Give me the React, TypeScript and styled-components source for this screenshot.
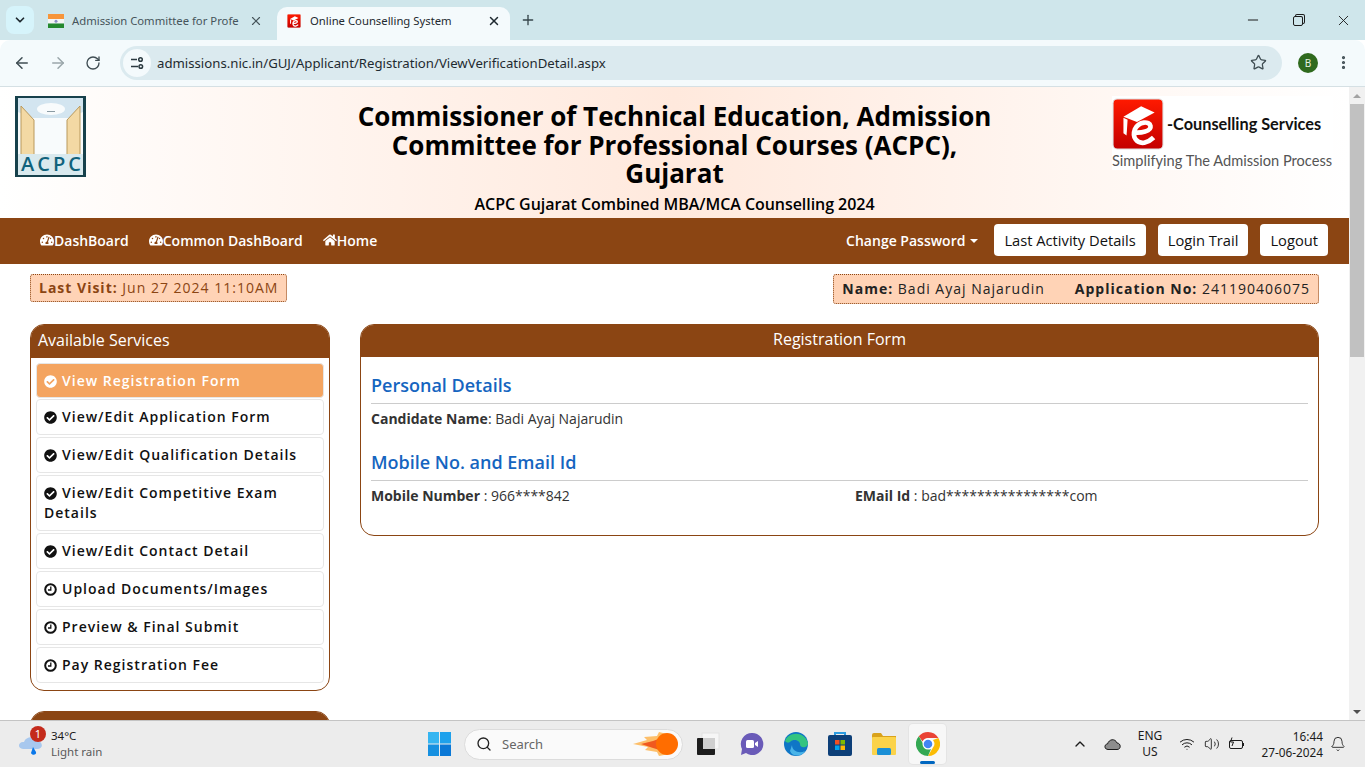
import styled, { createGlobalStyle } from "styled-components";
import { ArrowLeft, ArrowRight, ChevronDown, ChevronUp, Minus, MoreVertical, Plus, RotateCw, Search, Star, X, Bell, Volume2, Wifi } from "lucide-react";
import { FaCheckCircle, FaHome, FaTachometerAlt } from "react-icons/fa";

const GlobalStyle = createGlobalStyle`
  html, body { margin: 0; height: 100%; overflow: hidden; }
  body { font-family: "Open Sans", "Noto Sans", sans-serif; color: #333; background: #fff; }
  * { box-sizing: border-box; }
`;

const Screen = styled.div`
  width: 1365px;
  height: 767px;
  display: flex;
  flex-direction: column;
  overflow: hidden;
`;

// browser chrome
const TabStrip = styled.div`
  height: 40px;
  flex: none;
  background: #cfe6eb;
  display: flex;
  align-items: flex-end;
  padding-left: 6px;
  font-family: "Noto Sans", sans-serif;
  font-size: 11.3px;
`;

const TabSearch = styled.div`
  width: 28px;
  height: 28px;
  margin-bottom: 6px;
  border-radius: 8px;
  background: #d6f4fb;
  display: flex;
  align-items: center;
  justify-content: center;
  color: #1f2a30;
`;

const Tab = styled.div<{ $active?: boolean }>`
  width: ${(p) => (p.$active ? "233px" : "230px")};
  height: 33px;
  margin-left: ${(p) => (p.$active ? "7px" : "6px")};
  padding: ${(p) => (p.$active ? "0 9px 6px 10px" : "0 7px 6px 8px")};
  display: flex;
  align-items: center;
  gap: 8px;
  border-radius: 10px 10px 0 0;
  background: ${(p) => (p.$active ? "#f4fafc" : "transparent")};
  color: ${(p) => (p.$active ? "#1f2a30" : "#46545a")};

  svg { flex: none; }
`;

const TabTitle = styled.span<{ $active?: boolean }>`
  flex: 1;
  margin-left: ${(p) => (p.$active ? "1px" : "0")};
  white-space: nowrap;
`;

const NewTab = styled.div`
  margin: 0 0 6px 10px;
  height: 28px;
  display: flex;
  align-items: center;
  color: #36454b;
`;

const WindowControls = styled.div`
  margin-left: auto;
  height: 40px;
  display: flex;
  align-items: center;
  gap: 29px;
  padding-right: 13px;
  color: #1c1c1c;
`;

const RestoreIcon = styled.div`
  width: 10px;
  height: 10px;
  border: 1px solid #1c1c1c;
  border-radius: 2px;
  margin: 2px 3px 0 3px;
  box-shadow: 2px -2px 0 -1px #cfe6eb, 2px -2px 0 0 #1c1c1c;
`;

const Toolbar = styled.div`
  height: 47px;
  flex: none;
  background: #f4fafc;
  border-bottom: 1px solid #d5e0e4;
  border-radius: 10px 10px 0 0;
  display: flex;
  align-items: center;
  padding: 0 13px 1px 13px;
  color: #3f4d53;
`;

const NavIcons = styled.div`
  width: 107px;
  display: flex;
  align-items: center;
  gap: 18px;
`;

const AddressBar = styled.div`
  width: 1162px;
  height: 34px;
  border-radius: 17px;
  background: #dbeaef;
  display: flex;
  align-items: center;
  padding: 0 15px 0 3px;
`;

const SiteInfo = styled.div`
  width: 28px;
  height: 28px;
  border-radius: 50%;
  background: #f4fafc;
  display: flex;
  align-items: center;
  justify-content: center;
`;

const Url = styled.span`
  flex: 1;
  margin-left: 6px;
  font-family: "Noto Sans", sans-serif;
  font-size: 13.2px;
  color: #1f2a30;
`;

const Avatar = styled.div`
  width: 20px;
  height: 20px;
  margin: 0 17px 0 16px;
  border-radius: 50%;
  background: #2f6a1e;
  color: #e8f3e2;
  font-family: "Noto Sans", sans-serif;
  font-size: 10px;
  display: flex;
  align-items: center;
  justify-content: center;
`;

// page
const Viewport = styled.div`
  flex: 1;
  min-height: 0;
  display: flex;
`;

const Page = styled.div`
  flex: 1;
  min-width: 0;
  overflow: hidden;
`;

const Scrollbar = styled.div`
  width: 16px;
  flex: none;
  background: #f1f1f1;
  display: flex;
  flex-direction: column;
  align-items: center;
`;

const ScrollArrow = styled.div<{ $down?: boolean }>`
  height: 17px;
  flex: none;
  display: flex;
  align-items: center;
  justify-content: center;

  &::before {
    content: "";
    border-left: 4px solid transparent;
    border-right: 4px solid transparent;
    ${(p) => (p.$down ? "border-top: 4px solid #505050;" : "border-bottom: 4px solid #a3a3a3;")}
  }
`;

const ScrollThumb = styled.div`
  width: 14px;
  height: 253px;
  flex: none;
  background: #c1c1c1;
`;

const ScrollTrack = styled.div`
  flex: 1;
`;

const Header = styled.header`
  height: 131px;
  display: grid;
  grid-template-columns: 1fr 2fr 1fr;
  background: linear-gradient(to right, #fff 0%, #ffe9dd 50%, #fff 100%);
`;

const HeaderLeft = styled.div`
  padding: 9px 0 0 15px;
`;

const HeaderCenter = styled.div`
  padding: 15px 15px 0;
  text-align: center;
  color: #000;
`;

const SiteTitle = styled.h1`
  margin: 0;
  font-size: 26px;
  line-height: 28.6px;
  font-weight: 700;
`;

const SubTitle = styled.div`
  margin-top: 5px;
  font-size: 16px;
  line-height: 22px;
  font-weight: 600;
  letter-spacing: -0.05px;
`;

const HeaderRight = styled.div`
  padding: 9px 16px 0 0;
  display: flex;
  justify-content: flex-end;
`;

const BrandBox = styled.div`
  width: 221px;
  height: 74px;
  background: #fff;
`;

const BrandRow = styled.div`
  height: 55px;
  display: flex;
  align-items: center;
  gap: 3px;
`;

const BrandName = styled.span`
  font-family: "Lato", sans-serif;
  font-size: 16.3px;
  font-weight: 700;
  color: #111;
`;

const BrandTag = styled.div`
  font-family: "Lato", sans-serif;
  font-size: 14.6px;
  line-height: 19px;
  color: #555;
  white-space: nowrap;
`;

const NavBar = styled.nav`
  height: 46px;
  background: #8b4513;
  padding: 0 21px 2px 30px;
  display: flex;
  align-items: center;
`;

const NavLink = styled.a`
  padding: 0 10px;
  display: flex;
  align-items: center;
  font-size: 14px;
  font-weight: 600;
  color: #fff;
  white-space: nowrap;
`;

const DropLink = styled(NavLink)`
  padding-right: 4px;
`;

const Caret = styled.span`
  width: 0;
  height: 0;
  margin-left: 5px;
  margin-top: 2px;
  border-left: 4px solid transparent;
  border-right: 4px solid transparent;
  border-top: 4px solid #fff;
`;

const NavRight = styled.div`
  margin-left: auto;
  display: flex;
  align-items: center;
  gap: 12px;
`;

const NavButton = styled.button`
  height: 32px;
  padding: 0 10px;
  border: 0;
  border-radius: 4px;
  background: #fff;
  color: #111;
  font: 500 14.7px "Open Sans", sans-serif;
`;

const InfoStrip = styled.div`
  padding: 10px 30px 0;
  height: 60px;
  display: flex;
  justify-content: space-between;
  align-items: flex-start;
`;

const InfoBox = styled.div<{ $brown?: boolean }>`
  padding: 0 8px 2px;
  height: ${(p) => (p.$brown ? "28px" : "30px")};
  display: flex;
  align-items: center;
  gap: 30px;
  background: #ffd3b6;
  border: 1px dotted #8b4513;
  border-radius: 3px;
  font-size: 14px;
  letter-spacing: 1px;
  white-space: nowrap;
  color: ${(p) => (p.$brown ? "#8b4513" : "#222")};

  b { font-weight: 700; }
`;

const Columns = styled.div`
  padding: 0 30px;
  display: grid;
  grid-template-columns: 300px 959px;
  gap: 30px;
  align-items: start;
`;

const Panel = styled.section<{ $spaced?: boolean }>`
  margin-top: ${(p) => (p.$spaced ? "20px" : "0")};
  border: 1px solid #8b4513;
  border-radius: 14px;
  background: #fff;
  overflow: hidden;
`;

const PanelHead = styled.div<{ $center?: boolean }>`
  height: ${(p) => (p.$center ? "32px" : "33px")};
  background: #8b4513;
  color: #fff;
  font-size: 16px;
  line-height: ${(p) => (p.$center ? "29px" : "31px")};
  padding: 0 7px;
  text-align: ${(p) => (p.$center ? "center" : "left")};
`;

const ServiceList = styled.ul`
  list-style: none;
  margin: 0;
  padding: 5px 5px 7px;
  display: flex;
  flex-direction: column;
  gap: 2px;
`;

const ServiceItem = styled.li<{ $active?: boolean }>`
  padding: ${(p) => (p.$active ? "7px 7px 6px" : "7px")};
  margin-bottom: ${(p) => (p.$active ? "-1px" : "0")};
  border: 1px solid #e6e6e6;
  border-radius: 4px;
  background: ${(p) => (p.$active ? "#f4a460" : "#fff")};
  color: ${(p) => (p.$active ? "#fff" : "#111")};
  font-size: 14px;
  line-height: 20px;
  font-weight: 600;
  letter-spacing: 1px;

  svg {
    width: 13px;
    height: 13px;
    margin-right: 5px;
    vertical-align: -1.5px;
  }
`;

const PanelBody = styled.div`
  padding: 15px 10px 29px;
  font-size: 14px;
  line-height: 20px;
`;

const SectionTitle = styled.h4<{ $next?: boolean }>`
  margin: ${(p) => (p.$next ? "20px 0 5px" : "0 0 5px")};
  padding-bottom: 5px;
  border-bottom: 1px solid #ccc;
  font-size: 18px;
  line-height: 26px;
  font-weight: 600;
  color: #1565c0;
`;

const Field = styled.div`
  b { font-weight: 700; }
`;

const FieldRow = styled.div`
  display: grid;
  grid-template-columns: 484px 1fr;
`;

// taskbar
const Taskbar = styled.footer`
  height: 47px;
  flex: none;
  background: #ececec;
  border-top: 1px solid #c4c4c4;
  display: flex;
  align-items: center;
  font-family: "Noto Sans", sans-serif;
  color: #1b1b1b;
`;

const Weather = styled.div`
  position: relative;
  width: 428px;
  padding-left: 18px;
  display: flex;
  align-items: center;
  gap: 7px;
`;

const Badge = styled.span`
  position: absolute;
  left: 30px;
  top: -2px;
  width: 16px;
  height: 16px;
  border-radius: 50%;
  background: #c42b1c;
  color: #fff;
  font-size: 11px;
  line-height: 16px;
  text-align: center;
`;

const WeatherText = styled.div`
  font-size: 11.5px;
  line-height: 16px;
  span { display: block; color: #5a5a5a; }
`;

const TaskApps = styled.div`
  display: flex;
  align-items: center;
`;

const SearchBox = styled.div`
  width: 219px;
  height: 31px;
  margin: 0 6px 0 13px;
  padding: 0 3px 0 11px;
  border: 1px solid #dcdcdc;
  border-radius: 16px;
  background: #fafafa;
  display: flex;
  align-items: center;
  gap: 10px;
  font-size: 13px;
  color: #666;

  svg:last-child { margin-left: auto; }
`;

const AppSlot = styled.div<{ $active?: boolean }>`
  position: relative;
  width: 37px;
  height: 40px;
  margin-right: 7px;
  display: flex;
  align-items: center;
  justify-content: center;
  border-radius: 4px;
  background: ${(p) => (p.$active ? "#f7f7f7" : "transparent")};
  box-shadow: ${(p) => (p.$active ? "0 0 0 1px #e4e4e4" : "none")};

  ${(p) =>
    p.$active &&
    `&::after {
      content: "";
      position: absolute;
      bottom: 0;
      left: 11px;
      width: 15px;
      height: 3px;
      border-radius: 2px;
      background: #0067c0;
    }`}
`;

const Tray = styled.div`
  margin-left: auto;
  display: flex;
  align-items: center;
  padding-right: 19px;
`;

const TrayIcon = styled.div<{ $w: number }>`
  width: ${(p) => p.$w}px;
  display: flex;
  justify-content: center;
`;

const Lang = styled.div`
  width: 48px;
  text-align: center;
  font-size: 12px;
  line-height: 16px;
`;

const Clock = styled.div`
  width: 74px;
  margin: 0 7px 0 1px;
  text-align: right;
  font-size: 11.8px;
  line-height: 16px;
  white-space: nowrap;
`;

function IndiaFlag() {
  return (
    <svg width="16" height="14" viewBox="0 0 16 14">
      <rect width="16" height="5" fill="#f7953a" />
      <rect y="5" width="16" height="4.5" fill="#f5f5f5" />
      <rect y="9.500" width="16" height="4.500" fill="#25892f" />
      <circle cx="8" cy="7.200" r="1.500" fill="#8c8fc4" />
    </svg>
  );
}

function EMark({ size }: { size: number }) {
  return (
    <svg width={size} height={size} viewBox="0 0 50 50">
      <defs>
        <linearGradient id={`red${size}`} x1="0" y1="0" x2="0" y2="1">
          <stop offset="0" stopColor="#ff1a00" />
          <stop offset="1" stopColor="#c40000" />
        </linearGradient>
      </defs>
      <rect x="1" y="1" width="48" height="48" rx="4" fill={`url(#red${size})`} stroke="#ddd" />
      <path d="M11 18 L28 8 L41 14 L24 23 Z" fill="#fff" />
      <path d="M11 19 L11 34 L14 36 L15 21 Z" fill="#fff" />
      <path d="M20 33 C28 34 38 32 37 27 C36 22 26 22 22 30 C19 38 24 44 31 43 C35 42 38 40 40 38" fill="none" stroke="#fff" strokeWidth="4.500" />
    </svg>
  );
}

function AcpcLogo() {
  return (
    <svg width="71" height="81" viewBox="0 0 71 81">
      <rect width="71" height="81" fill="#17414c" />
      <rect x="3" y="2" width="65" height="77" fill="#f8fbfc" />
      <path d="M3 2h65v14l-15 6H18L3 16z" fill="#d3e5f0" />
      <ellipse cx="36" cy="13" rx="14" ry="6" fill="#f8fbfc" />
      <path d="M32 15h8v1h-8z" fill="#8a9ba3" />
      <path d="M6 10 L19 24 L19 62 L6 60 Z" fill="#f3d9a4" stroke="#b9995c" />
      <path d="M65 10 L52 24 L52 62 L65 60 Z" fill="#f3d9a4" stroke="#b9995c" />
      <rect x="3" y="58" width="65" height="21" fill="#d9e9ee" />
      <text x="36" y="75" textAnchor="middle" fontFamily="Open Sans" fontSize="20" fontWeight="600" textLength="60" fill="#10627c">ACPC</text>
    </svg>
  );
}

function ClockIcon() {
  return (
    <svg viewBox="0 0 13 13" fill="none" stroke="currentColor">
      <circle cx="6.500" cy="6.500" r="5.300" strokeWidth="2" />
      <path d="M6.800 3.500V7H4" strokeWidth="1.300" />
    </svg>
  );
}

function TuneIcon() {
  return (
    <svg width="14" height="14" viewBox="0 0 14 14" fill="none" stroke="#2b3a40" strokeWidth="1.500">
      <path d="M1 3.500h6M1 10.500h7" />
      <circle cx="10.500" cy="3.500" r="1.800" />
      <circle cx="10.800" cy="10.500" r="1.800" />
    </svg>
  );
}

function CloudRain() {
  return (
    <svg width="26" height="24" viewBox="0 0 26 24">
      <path d="M5 17c-6 0-5-8 1-7 2-6 11-6 13-1 6 0 7 8 0 8z" fill="#a8c8ee" />
      <path d="M15 15l3 5c1 3-4 4-5 1z" fill="#0a78ea" />
    </svg>
  );
}

function Fireball() {
  return (
    <svg width="46" height="26" viewBox="0 0 46 26">
      <path d="M0 13 L14 9 L11 6 L24 5 L26 1 L34 3 L36 23 L26 25 L24 21 L12 19 L15 16 Z" fill="#fdbf6a" />
      <path d="M8 13 L20 10 L28 7 L30 20 L20 17 Z" fill="#f0591f" />
      <circle cx="34" cy="13" r="11" fill="#ff6d00" />
    </svg>
  );
}

function WindowsLogo() {
  return (
    <svg width="23" height="24" viewBox="0 0 23 24">
      <rect width="11" height="11.500" fill="#35b5f1" />
      <rect x="12" width="11" height="11.500" fill="#1ea1ec" />
      <rect y="12.500" width="11" height="11.500" fill="#1690e0" />
      <rect x="12" y="12.500" width="11" height="11.500" fill="#0b78d6" />
    </svg>
  );
}

function TaskView() {
  return (
    <svg width="24" height="24" viewBox="0 0 24 24">
      <rect x="6" y="1" width="17" height="16" fill="#f6f6f6" stroke="#e2e2e2" />
      <rect x="1" y="6" width="18" height="17" rx="1" fill="#1d1d1d" />
      <rect x="7" y="6" width="12" height="11" fill="#cfcfcf" />
    </svg>
  );
}

function MeetIcon() {
  return (
    <svg width="24" height="24" viewBox="0 0 24 24">
      <path d="M12 1a11 11 0 1 1-6 20l-5 2 1-6A11 11 0 0 1 12 1z" fill="#6a5bb8" />
      <rect x="6" y="8" width="8" height="8" rx="1.500" fill="#fff" />
      <path d="M15 11l3-2v6l-3-2z" fill="#fff" />
    </svg>
  );
}

function EdgeIcon() {
  return (
    <svg width="24" height="24" viewBox="0 0 24 24">
      <circle cx="12" cy="12" r="12" fill="#0f76c6" />
      <path d="M1 9C4 0 20-2 24 11c0 5-8 6-8 1 0-3-6-6-10-2-2 1-3 1-5-1z" fill="#33c481" />
      <path d="M8 13c0 6 7 9 13 6-3 6-13 6-15 0z" fill="#49b4e8" />
    </svg>
  );
}

function StoreIcon() {
  return (
    <svg width="24" height="24" viewBox="0 0 24 24">
      <path d="M7 4V1h10v3" fill="none" stroke="#2b9be0" strokeWidth="2" />
      <rect x="0" y="3" width="24" height="21" rx="2" fill="#0d3f78" />
      <rect x="7" y="8" width="4.500" height="4.500" fill="#f25022" />
      <rect x="12.500" y="8" width="4.500" height="4.500" fill="#7fba00" />
      <rect x="7" y="13.500" width="4.500" height="4.500" fill="#00a4ef" />
      <rect x="12.500" y="13.500" width="4.500" height="4.500" fill="#ffb900" />
    </svg>
  );
}

function FolderIcon() {
  return (
    <svg width="24" height="22" viewBox="0 0 24 22">
      <path d="M0 2a2 2 0 0 1 2-2h7l2 3h13v6H0z" fill="#d9a21b" />
      <rect y="4" width="24" height="18" rx="1" fill="#fbd34a" />
      <rect x="5" y="15" width="14" height="7" rx="1.500" fill="#1a8fd6" />
    </svg>
  );
}

function ChromeIcon() {
  return (
    <svg width="24" height="24" viewBox="0 0 24 24">
      <path d="M12 0a12 12 0 0 1 10.400 6H12a6 6 0 0 0-5.500 3.500L2.800 4.300A12 12 0 0 1 12 0z" fill="#ea4335" />
      <path d="M22.400 6A12 12 0 0 1 12 24l5-8.500A6 6 0 0 0 17 8z" fill="#fbbc04" />
      <path d="M12 24A12 12 0 0 1 2.800 4.300l4.900 8.500A6 6 0 0 0 15 17z" fill="#34a853" />
      <circle cx="12" cy="12" r="5.500" fill="#fff" />
      <circle cx="12" cy="12" r="4.300" fill="#4285f4" />
    </svg>
  );
}

function OneDrive() {
  return (
    <svg width="17" height="12" viewBox="0 0 17 12">
      <path d="M4 11.500C0 11.500 0 6 3.500 6 5 1 11 0 13 5c4 0 4.500 6.500 0 6.500z" fill="#8d8d8d" stroke="#1b1b1b" />
    </svg>
  );
}

function Battery() {
  return (
    <svg width="17" height="14" viewBox="0 0 17 14" fill="none" stroke="#1b1b1b">
      <rect x="1.500" y="3.500" width="13" height="8" rx="1.500" />
      <path d="M15.500 6v3" />
      <path d="M4 0.500L2.500 5h3L4 9" />
    </svg>
  );
}

const services = [
  { label: "View Registration Form", done: true, active: true },
  { label: "View/Edit Application Form", done: true },
  { label: "View/Edit Qualification Details", done: true },
  { label: "View/Edit Competitive Exam Details", done: true },
  { label: "View/Edit Contact Detail", done: true },
  { label: "Upload Documents/Images", done: false },
  { label: "Preview & Final Submit", done: false },
  { label: "Pay Registration Fee", done: false },
];

export default function App() {
  return (
    <Screen>
      <GlobalStyle />
      <TabStrip>
        <TabSearch>
          <ChevronDown size={14} strokeWidth={3} />
        </TabSearch>
        <Tab>
          <IndiaFlag />
          <TabTitle>Admission Committee for Profe</TabTitle>
          <X size={14} strokeWidth={2} />
        </Tab>
        <Tab $active>
          <EMark size={14} />
          <TabTitle $active>Online Counselling System</TabTitle>
          <X size={14} strokeWidth={2.500} />
        </Tab>
        <NewTab>
          <Plus size={16} strokeWidth={2} />
        </NewTab>
        <WindowControls>
          <Minus size={16} strokeWidth={1.500} />
          <RestoreIcon />
          <X size={17} strokeWidth={1.300} />
        </WindowControls>
      </TabStrip>
      <Toolbar>
        <NavIcons>
          <ArrowLeft size={18} />
          <ArrowRight size={18} color="#9aa6aa" />
          <RotateCw size={16} />
        </NavIcons>
        <AddressBar>
          <SiteInfo>
            <TuneIcon />
          </SiteInfo>
          <Url>admissions.nic.in/GUJ/Applicant/Registration/ViewVerificationDetail.aspx</Url>
          <Star size={17} strokeWidth={1.800} />
        </AddressBar>
        <Avatar>B</Avatar>
        <MoreVertical size={17} strokeWidth={2.500} />
      </Toolbar>

      <Viewport>
        <Page>
          <Header>
            <HeaderLeft>
              <AcpcLogo />
            </HeaderLeft>
            <HeaderCenter>
              <SiteTitle>Commissioner of Technical Education, Admission Committee for Professional Courses (ACPC), Gujarat</SiteTitle>
              <SubTitle>ACPC Gujarat Combined MBA/MCA Counselling 2024</SubTitle>
            </HeaderCenter>
            <HeaderRight>
              <BrandBox>
                <BrandRow>
                  <EMark size={52} />
                  <BrandName>-Counselling Services</BrandName>
                </BrandRow>
                <BrandTag>Simplifying The Admission Process</BrandTag>
              </BrandBox>
            </HeaderRight>
          </Header>

          <NavBar>
            <NavLink><FaTachometerAlt size={14} />DashBoard</NavLink>
            <NavLink><FaTachometerAlt size={14} />Common DashBoard</NavLink>
            <NavLink><FaHome size={14} />Home</NavLink>
            <NavRight>
              <DropLink>Change Password<Caret /></DropLink>
              <NavButton>Last Activity Details</NavButton>
              <NavButton>Login Trail</NavButton>
              <NavButton>Logout</NavButton>
            </NavRight>
          </NavBar>

          <InfoStrip>
            <InfoBox $brown>
              <span><b>Last Visit:</b> Jun 27 2024 11:10AM</span>
            </InfoBox>
            <InfoBox>
              <span><b>Name:</b> Badi Ayaj Najarudin</span>
              <span><b>Application No:</b> 241190406075</span>
            </InfoBox>
          </InfoStrip>

          <Columns>
            <div>
              <Panel>
                <PanelHead>Available Services</PanelHead>
                <ServiceList>
                  {services.map((s) => (
                    <ServiceItem key={s.label} $active={s.active}>
                      {s.done ? <FaCheckCircle /> : <ClockIcon />}
                      {s.label}
                    </ServiceItem>
                  ))}
                </ServiceList>
              </Panel>
              <Panel $spaced>
                <PanelHead />
              </Panel>
            </div>
            <Panel>
              <PanelHead $center>Registration Form</PanelHead>
              <PanelBody>
                <SectionTitle>Personal Details</SectionTitle>
                <Field><b>Candidate Name</b>: Badi Ayaj Najarudin</Field>
                <SectionTitle $next>Mobile No. and Email Id</SectionTitle>
                <FieldRow>
                  <Field><b>Mobile Number</b> : 966****842</Field>
                  <Field><b>EMail Id</b> : bad****************com</Field>
                </FieldRow>
              </PanelBody>
            </Panel>
          </Columns>
        </Page>
        <Scrollbar>
          <ScrollArrow />
          <ScrollThumb />
          <ScrollTrack />
          <ScrollArrow $down />
        </Scrollbar>
      </Viewport>

      <Taskbar>
        <Weather>
          <CloudRain />
          <Badge>1</Badge>
          <WeatherText>
            34°C
            <span>Light rain</span>
          </WeatherText>
        </Weather>
        <TaskApps>
          <WindowsLogo />
          <SearchBox>
            <Search size={16} color="#222" />
            Search
            <Fireball />
          </SearchBox>
          <AppSlot><TaskView /></AppSlot>
          <AppSlot><MeetIcon /></AppSlot>
          <AppSlot><EdgeIcon /></AppSlot>
          <AppSlot><StoreIcon /></AppSlot>
          <AppSlot><FolderIcon /></AppSlot>
          <AppSlot $active><ChromeIcon /></AppSlot>
        </TaskApps>
        <Tray>
          <TrayIcon $w={36}><ChevronUp size={16} /></TrayIcon>
          <TrayIcon $w={28}><OneDrive /></TrayIcon>
          <Lang>ENG<br />US</Lang>
          <TrayIcon $w={26}><Wifi size={16} strokeWidth={1.500} /></TrayIcon>
          <TrayIcon $w={24}><Volume2 size={16} strokeWidth={1.300} /></TrayIcon>
          <TrayIcon $w={24}><Battery /></TrayIcon>
          <Clock>16:44<br />27-06-2024</Clock>
          <Bell size={16} strokeWidth={1.300} />
        </Tray>
      </Taskbar>
    </Screen>
  );
}
